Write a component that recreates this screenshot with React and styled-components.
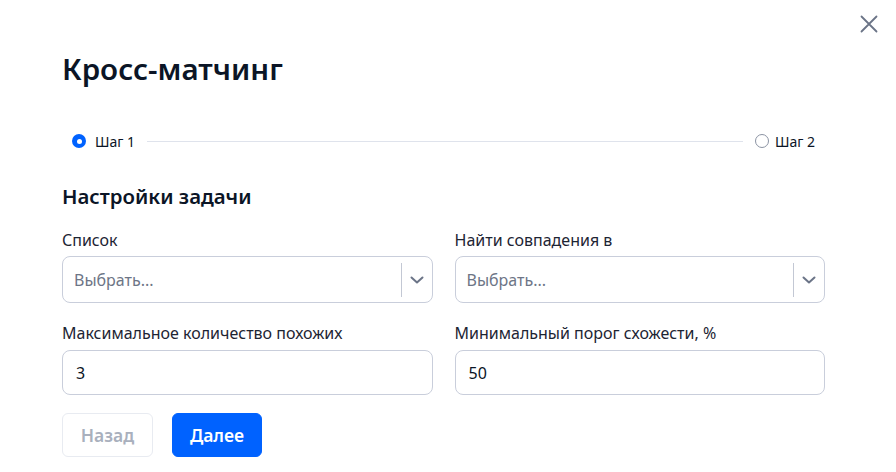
import React from "react";
import styled, { createGlobalStyle } from "styled-components";

const GlobalStyle = createGlobalStyle`
  body {
    margin: 0;
    background: #fff;
    font-family: "Noto Sans", "Open Sans", sans-serif;
    color: #0b1526;
  }
  * { box-sizing: border-box; }
`;

const Modal = styled.div`
  position: relative;
  width: 896px;
  height: 472px;
  padding: 51px 71px 0 62px;
  background: #fff;
  overflow: hidden;
`;

const CloseButton = styled.button`
  position: absolute;
  top: 15px;
  right: 18px;
  width: 18px;
  height: 18px;
  padding: 0;
  border: none;
  background: none;
  color: #6b7487;
  cursor: pointer;
  display: flex;
  align-items: center;
  justify-content: center;
`;

const Title = styled.h1`
  margin: 0;
  font-size: 29.5px;
  line-height: 36px;
  font-weight: 600;
  color: #0b1526;
`;

const Steps = styled.div`
  display: flex;
  align-items: center;
  height: 20px;
  margin-top: 44px;
  padding: 0 10px;
`;

const Step = styled.div`
  display: flex;
  align-items: center;
  gap: ${(p) => (p.active ? "9px" : "6px")};
  font-size: 14px;
  color: #0b1526;
`;

const Radio = styled.span`
  width: 14px;
  height: 14px;
  border-radius: 50%;
  flex-shrink: 0;
  background: ${(p) => (p.active ? "#0062ff" : "#fff")};
  border: ${(p) => (p.active ? "none" : "1.5px solid #8b93a3")};
  display: flex;
  align-items: center;
  justify-content: center;

  &::after {
    content: "";
    width: 5px;
    height: 5px;
    border-radius: 50%;
    background: #fff;
    display: ${(p) => (p.active ? "block" : "none")};
  }
`;

const StepLine = styled.div`
  flex: 1;
  height: 1px;
  background: #dfe3ec;
  margin: 0 12px;
`;

const Section = styled.h2`
  margin: 31px 0 0;
  font-size: 20.4px;
  line-height: 28px;
  font-weight: 600;
  color: #0b1526;
`;

const Grid = styled.div`
  display: grid;
  grid-template-columns: 1fr 1fr;
  column-gap: 22px;
  row-gap: 18px;
  margin-top: 18px;
`;

const Field = styled.div`
  display: flex;
  flex-direction: column;
  gap: ${(p) => (p.input ? "5px" : "4px")};
`;

const Label = styled.label`
  font-size: 16px;
  line-height: 24px;
  color: #1d2433;
`;

const Box = styled.div`
  height: ${(p) => (p.select ? "47px" : "45px")};
  border: 1px solid #c9cedb;
  border-radius: 8px;
  display: flex;
  align-items: center;
  padding-left: 11px;
  font-size: 16px;
  background: #fff;
`;

const Placeholder = styled.span`
  flex: 1;
  color: #6d7586;
`;

const Value = styled.span`
  flex: 1;
  color: #0b1526;
  padding-left: 2px;
`;

const Divider = styled.span`
  width: 1px;
  height: 34px;
  background: #c3c8d4;
`;

const Chevron = styled.span`
  width: 30px;
  display: flex;
  align-items: center;
  justify-content: center;
  color: #6b7487;
`;

const Actions = styled.div`
  display: flex;
  gap: 19px;
  margin-top: 18px;
`;

const Button = styled.button`
  height: 44px;
  width: ${(p) => (p.primary ? "90px" : "91px")};
  padding: 0;
  border-radius: 6px;
  font-family: inherit;
  font-size: 17.5px;
  font-weight: 600;
  cursor: pointer;
  border: 1px solid ${(p) => (p.primary ? "#0062ff" : "#e8ebf1")};
  background: ${(p) => (p.primary ? "#0062ff" : "#fff")};
  color: ${(p) => (p.primary ? "#fff" : "#a9b0bd")};
`;

function ChevronIcon() {
  return (
    <svg width="14" height="10" viewBox="0 0 14 10" fill="none">
      <path d="M1.5 2.5l5.5 5 5.5-5" stroke="currentColor" strokeWidth="2" strokeLinecap="round" strokeLinejoin="round" />
    </svg>
  );
}

function SelectBox() {
  return (
    <Box select>
      <Placeholder>Выбрать...</Placeholder>
      <Divider />
      <Chevron>
        <ChevronIcon />
      </Chevron>
    </Box>
  );
}

export default function App() {
  return (
    <>
      <GlobalStyle />
      <Modal>
        <CloseButton aria-label="Закрыть">
          <svg width="18" height="18" viewBox="0 0 18 18" fill="none">
            <path d="M1.5 1.5l15 15M16.5 1.5l-15 15" stroke="currentColor" strokeWidth="1.8" strokeLinecap="round" />
          </svg>
        </CloseButton>
        <Title>Кросс-матчинг</Title>
        <Steps>
          <Step active>
            <Radio active />
            Шаг 1
          </Step>
          <StepLine />
          <Step>
            <Radio />
            Шаг 2
          </Step>
        </Steps>
        <Section>Настройки задачи</Section>
        <Grid>
          <Field>
            <Label>Список</Label>
            <SelectBox />
          </Field>
          <Field>
            <Label>Найти совпадения в</Label>
            <SelectBox />
          </Field>
          <Field input>
            <Label>Максимальное количество похожих</Label>
            <Box>
              <Value>3</Value>
            </Box>
          </Field>
          <Field input>
            <Label>Минимальный порог схожести, %</Label>
            <Box>
              <Value>50</Value>
            </Box>
          </Field>
        </Grid>
        <Actions>
          <Button disabled>Назад</Button>
          <Button primary>Далее</Button>
        </Actions>
      </Modal>
    </>
  );
}
